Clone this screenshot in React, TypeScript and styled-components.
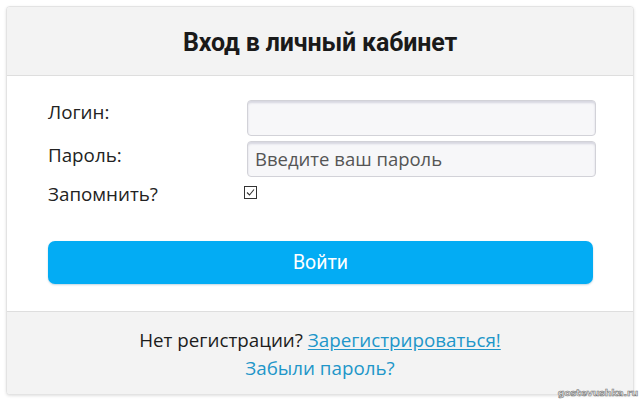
import React from "react";
import styled, { createGlobalStyle } from "styled-components";

const Global = createGlobalStyle`
  html, body { margin: 0; padding: 0; background: #ffffff; }
  body { font-family: "Open Sans", "Liberation Sans", Arial, sans-serif; }
  * { box-sizing: border-box; }
`;

const Page = styled.div`
  width: 640px;
  height: 401px;
  padding: 6px;
  position: relative;
  overflow: hidden;
`;

const Card = styled.div`
  width: 628px;
  height: 389px;
  border: 1px solid #e3e3e3;
  border-radius: 4px;
  background: #ffffff;
  box-shadow: 0 1px 3px rgba(0, 0, 0, 0.12);
  display: flex;
  flex-direction: column;
  overflow: hidden;
`;

const Header = styled.div`
  height: 69px;
  background: #f3f3f3;
  border-bottom: 1px solid #dedede;
  display: flex;
  align-items: center;
  justify-content: center;
`;

const Title = styled.h1`
  margin: 0;
  padding-top: 2px;
  font-family: Roboto, "Liberation Sans", sans-serif;
  font-weight: 700;
  font-size: 25px;
  letter-spacing: -0.15px;
  color: #1a1a1a;
`;

const Body = styled.div`
  flex: 1;
  padding: 21px 40px 0 41px;
  display: flex;
  flex-direction: column;
`;

const Row = styled.div<{ $h: number }>`
  display: grid;
  grid-template-columns: 199px 349px;
  align-items: center;
  height: ${(p) => p.$h}px;
`;

const Label = styled.label<{ $dy?: number }>`
  font-size: 18.8px;
  color: #222;
  position: relative;
  top: ${(p) => p.$dy ?? 0}px;
`;

const Input = styled.input`
  width: 349px;
  height: 36px;
  border: 1px solid #d2d2d8;
  border-radius: 4px;
  background: #f7f7f9;
  box-shadow: inset 0 2px 2px rgba(120, 120, 150, 0.25);
  padding: 0 7px;
  font-family: "Open Sans", "Liberation Sans", sans-serif;
  font-size: 18.5px;
  color: #333;
  outline: none;
  &::placeholder { color: #555; }
`;

const Check = styled.span`
  width: 13px;
  height: 13px;
  margin-left: -3px;
  border: 1px solid #333;
  background: #fff;
  display: inline-flex;
  align-items: center;
  justify-content: center;
`;

const Button = styled.button`
  margin-top: 38px;
  width: 545px;
  height: 43px;
  border: none;
  border-radius: 7px;
  background: #03acf4;
  box-shadow: 0 1px 2px rgba(0, 90, 140, 0.25);
  color: #fff;
  font-family: Roboto, "Liberation Sans", sans-serif;
  font-size: 19.5px;
  font-weight: 400;
  cursor: pointer;
`;

const Footer = styled.div`
  height: 83px;
  background: #f3f3f3;
  border-top: 1px solid #dedede;
  display: flex;
  flex-direction: column;
  align-items: center;
  padding-top: 16px;
  gap: 3px;
`;

const FootLine = styled.div`
  font-size: 18.8px;
  color: #1c1c1c;
  line-height: 25px;
`;

const Link = styled.a<{ $u?: boolean }>`
  color: #2196c9;
  text-decoration: ${(p) => (p.$u ? "underline" : "none")};
  text-underline-offset: 2px;
`;

const Watermark = styled.div`
  position: absolute;
  right: 2px;
  bottom: 3px;
  font-family: "DejaVu Sans", sans-serif;
  font-weight: 700;
  font-size: 9.5px;
  letter-spacing: -0.2px;
  color: #ececec;
  -webkit-text-stroke: 0.6px #777;
`;

export default function App() {
  return (
    <Page>
      <Global />
      <Card>
        <Header>
          <Title>Вход в личный кабинет</Title>
        </Header>
        <Body>
          <Row $h={41}>
            <Label $dy={-6}>Логин:</Label>
            <Input type="text" />
          </Row>
          <Row $h={41}>
            <Label $dy={-4}>Пароль:</Label>
            <Input type="password" placeholder="Введите ваш пароль" />
          </Row>
          <Row $h={24}>
            <Label $dy={2}>Запомнить?</Label>
            <Check>
              <svg width="9" height="9" viewBox="0 0 9 9">
                <path d="M1 4.5 L3.5 7 L8 1.5" fill="none" stroke="#333" strokeWidth="1.1" />
              </svg>
            </Check>
          </Row>
          <Button>Войти</Button>
        </Body>
        <Footer>
          <FootLine>
            Нет регистрации? <Link href="#" $u>Зарегистрироваться!</Link>
          </FootLine>
          <FootLine>
            <Link href="#">Забыли пароль?</Link>
          </FootLine>
        </Footer>
      </Card>
      <Watermark>gostevushka.ru</Watermark>
    </Page>
  );
}
